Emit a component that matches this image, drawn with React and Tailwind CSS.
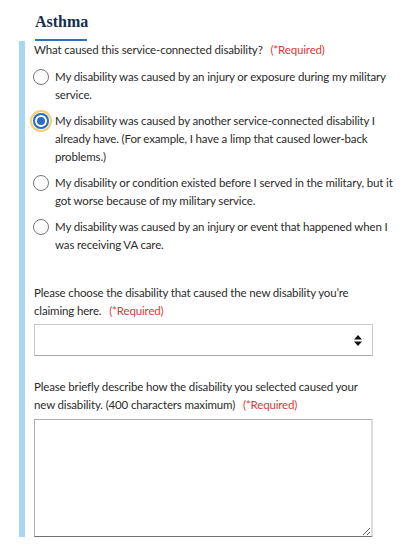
const OPTIONS = [
  {
    lines: ["My disability was caused by an injury or exposure during my military", "service."],
  },
  {
    lines: [
      "My disability was caused by another service-connected disability I",
      "already have. (For example, I have a limp that caused lower-back",
      "problems.)",
    ],
    checked: true,
  },
  {
    lines: ["My disability or condition existed before I served in the military, but it", "got worse because of my military service."],
  },
  {
    lines: ["My disability was caused by an injury or event that happened when I", "was receiving VA care."],
  },
];

function Required() {
  return <span className="ml-[5px] text-[#d9393b]">(*Required)</span>;
}

function Radio({ checked }) {
  if (checked) {
    return (
      <span className="mt-[1px] block h-4 w-4 shrink-0 rounded-full bg-[#2a6fbf] shadow-[inset_0_0_0_2px_#2a6fbf,inset_0_0_0_4px_#fff,0_0_0_1px_#fff,0_0_0_3px_#f5cf72]" />
    );
  }
  return <span className="mt-[1px] block h-4 w-4 shrink-0 rounded-full border border-[#767676] bg-white" />;
}

export default function App() {
  return (
    <div
      className="h-[559px] w-[410px] overflow-hidden bg-white pt-[12px] text-[11.5px] leading-[18px] tracking-[-0.15px] text-[#2b2b2b]"
      style={{ fontFamily: "Lato, 'Liberation Sans', sans-serif" }}
    >
      {/* Heading */}
      <h2
        className="ml-[35px] text-[16px] font-bold leading-[20px] tracking-normal text-[#162e51]"
        style={{ fontFamily: "'Liberation Serif', serif" }}
      >
        Asthma
      </h2>
      <div className="ml-[35px] mt-[7px] h-[2px] w-[52px] bg-[#2a72c0]" />

      <div className="ml-[19px] flex">
        {/* left accent bar */}
        <div className="w-[6px] shrink-0 bg-[#a7d8ef]" />

        <div className="pl-[9px]">
          <p className="whitespace-nowrap">
            What caused this service-connected disability? <Required />
          </p>

          <div className="mt-[9px] flex flex-col gap-[8px]">
            {OPTIONS.map((o, i) => (
              <div key={i} className="-ml-[1px] flex items-start gap-[6px]">
                <Radio checked={o.checked} />
                <p className="whitespace-nowrap">
                  {o.lines.map((l, j) => (
                    <span key={j}>
                      {l}
                      {j < o.lines.length - 1 && <br />}
                    </span>
                  ))}
                </p>
              </div>
            ))}
          </div>

          {/* Select */}
          <p className="mt-[30px] whitespace-nowrap">
            Please choose the disability that caused the new disability you’re
            <br />
            claiming here. <Required />
          </p>
          <div className="relative mt-[4px] w-[339px]">
            <select className="block h-[32px] w-full appearance-none border border-[#c8c8c8] border-b-[#a9a9a9] bg-white px-2 outline-none" />
            <svg
              className="pointer-events-none absolute right-[11px] top-[11px]"
              width="8"
              height="11"
              viewBox="0 0 8 11"
            >
              <path d="M4 0L8 4.5H0Z" fill="#111" />
              <path d="M4 11L8 6.5H0Z" fill="#111" />
            </svg>
          </div>

          {/* Textarea */}
          <p className="mt-[22px] whitespace-nowrap">
            Please briefly describe how the disability you selected caused your
            <br />
            new disability. (400 characters maximum) <Required />
          </p>
          <textarea className="mt-[5px] block h-[118px] w-[339px] border border-[#a9aeb1] border-r-2 border-r-[#dcdcdc] border-b-[#6d7177] bg-white outline-none" />
        </div>
      </div>
    </div>
  );
}
